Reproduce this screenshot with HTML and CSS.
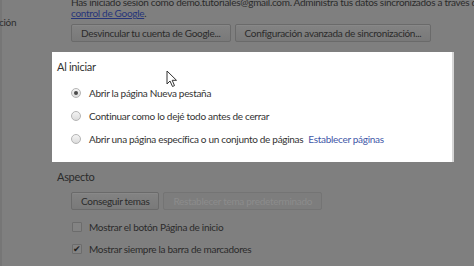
FILE: index.html
```html
<!DOCTYPE html>
<html lang="es">
<head>
<meta charset="UTF-8" />
<meta name="viewport" content="width=device-width, initial-scale=1" />
<title>Configuración</title>
<link rel="stylesheet" href="styles.css">
</head>
<body>

  <div class="layout">
    <!-- Left navigation, mostly cut off -->
    <aside class="sidebar">
      <span class="nav-item">ción</span>
    </aside>

    <main class="settings">
      <!-- Sync section -->
      <section class="section sync">
        <p class="sync-text">Has iniciado sesión como demo.tutoriales@gmail.com. Administra tus datos sincronizados a través de</p>
        <p class="sync-text"><a class="dim-link" href="#">control de Google</a>.</p>
        <div class="btn-row">
          <button class="btn">Desvincular tu cuenta de Google...</button>
          <button class="btn">Configuración avanzada de sincronización...</button>
        </div>
      </section>

      <!-- Highlighted section -->
      <section class="section highlight">
        <h3 class="section-title">Al iniciar</h3>
        <div class="option-list">
          <label class="option"><span class="radio checked"></span>Abrir la página Nueva pestaña</label>
          <label class="option"><span class="radio"></span>Continuar como lo dejé todo antes de cerrar</label>
          <label class="option"><span class="radio"></span>Abrir una página específica o un conjunto de páginas <a class="link" href="#">Establecer páginas</a></label>
        </div>
      </section>

      <!-- Appearance section -->
      <section class="section">
        <h3 class="section-title">Aspecto</h3>
        <div class="btn-row">
          <button class="btn">Conseguir temas</button>
          <button class="btn disabled">Restablecer tema predeterminado</button>
        </div>
        <div class="check-list">
          <label class="option check-row"><span class="checkbox"></span>Mostrar el botón Página de inicio</label>
          <label class="option check-row"><span class="checkbox checked">&#10004;</span>Mostrar siempre la barra de marcadores</label>
        </div>
      </section>
    </main>
  </div>

  <!-- Mouse pointer -->
  <svg class="cursor" width="14" height="18" viewBox="0 0 14 18">
    <path d="M1 1 L1 14 L4 11 L6.5 16.5 L8.5 15.6 L6.2 10.3 L10.5 10.3 Z" fill="#fff" stroke="#333" stroke-width="1" stroke-linejoin="round"/>
  </svg>

</body>
</html>
```

FILE: styles.css
```css
/* Base */
* {
  box-sizing: border-box;
}
body {
  margin: 0;
  width: 474px;
  height: 266px;
  overflow: hidden;
  background: #7f7f7f;
  font-family: Lato, 'Open Sans', sans-serif;
  font-size: 10px;
  letter-spacing: -0.3px;
  color: #2b2b2b;
  position: relative;
}
.layout {
  display: flex;
  height: 100%;
}
.sidebar {
  width: 52px;
  flex-shrink: 0;
  border-left: 2px solid #767676;
  padding-top: 16px;
}
.nav-item {
  display: block;
  margin-left: -3px;
  line-height: 12px;
  color: #2e2e2e;
}
.settings {
  flex: 1;
  min-width: 0;
}
.section {
  padding-left: 5px;
}

/* Sync */
.sync {
  margin-top: -3px;
  padding-left: 19px;
}
.sync-text {
  margin: 0;
  line-height: 11px;
  white-space: nowrap;
}
.dim-link {
  color: #26357a;
}
.btn-row {
  display: flex;
  gap: 4px;
  margin-top: 5px;
}
.btn {
  flex-shrink: 0;
  height: 18px;
  padding: 0 9px;
  white-space: nowrap;
  font-family: inherit;
  font-size: 10px;
  letter-spacing: -0.3px;
  color: #2b2b2b;
  background: linear-gradient(#838383, #797979);
  border: 1px solid #6a6a6a;
  border-radius: 2px;
  box-shadow: inset 0 1px 0 #888;
}
.btn.disabled {
  color: #8c8c8c;
  background: #7d7d7d;
  border-color: #747474;
  box-shadow: none;
}

/* Highlighted section */
.highlight {
  width: 402px;
  margin-top: 10px;
  height: 110px;
  padding-top: 8px;
  background: #fff;
  border-right: 2px solid #d6d6d6;
  color: #333;
}
.section-title {
  margin: 0;
  font-size: 11px;
  font-weight: normal;
  line-height: 14px;
}
.option-list {
  margin-top: 7px;
  padding-left: 14px;
}
.option {
  display: flex;
  align-items: center;
  height: 23px;
  white-space: nowrap;
}
.radio {
  width: 10px;
  height: 10px;
  margin-right: 8px;
  border-radius: 50%;
  border: 1px solid #b4b4b4;
  background: linear-gradient(#f4f4f4, #dcdcdc);
  position: relative;
}
.radio.checked::after {
  content: "";
  position: absolute;
  top: 2px;
  left: 2px;
  width: 4px;
  height: 4px;
  border-radius: 50%;
  background: #4a4a4a;
}
.link {
  margin-left: 5px;
  color: #3f58a8;
  text-decoration: none;
}

/* Appearance */
.highlight + .section {
  margin-top: 8px;
}
.highlight + .section .btn-row {
  margin-top: 8px;
  padding-left: 14px;
}
.check-list {
  margin-top: 6px;
  padding-left: 15px;
}
.check-row {
  height: 22px;
}
.checkbox {
  width: 10px;
  height: 10px;
  margin-right: 7px;
  border: 1px solid #6c6c6c;
  background: #838383;
  border-radius: 1px;
  font-size: 9px;
  line-height: 8px;
  letter-spacing: 0;
  text-align: center;
  color: #1f1f1f;
}

/* Pointer over the dialog */
.cursor {
  position: absolute;
  left: 166px;
  top: 70px;
}
```
